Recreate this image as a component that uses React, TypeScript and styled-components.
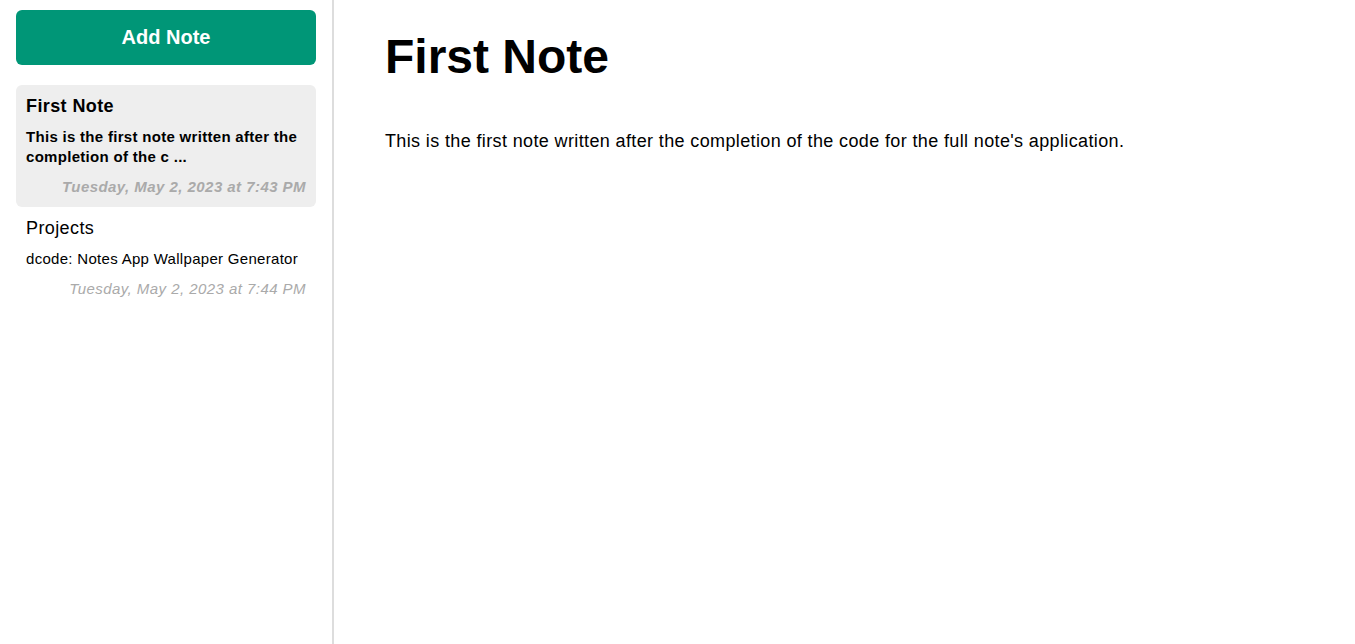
import React from "react";
import styled, { createGlobalStyle } from "styled-components";

const Global = createGlobalStyle`
  html, body { margin: 0; padding: 0; background: #fff; }
  body { font-family: "Liberation Sans", Arial, sans-serif; color: #000; }
  * { box-sizing: border-box; }
`;

const Layout = styled.div`
  display: flex;
  height: 644px;
`;

const Sidebar = styled.aside`
  width: 334px;
  flex: none;
  border-right: 2px solid #ddd;
  padding: 10px 16px;
  display: flex;
  flex-direction: column;
`;

const AddButton = styled.button`
  height: 55px;
  border: none;
  border-radius: 6px;
  background: #009677;
  color: #fff;
  font-family: inherit;
  font-size: 20px;
  font-weight: bold;
  cursor: pointer;
  margin-bottom: 20px;
`;

const NoteList = styled.div`
  display: flex;
  flex-direction: column;
`;

const NoteItem = styled.div<{ $active?: boolean }>`
  padding: 10px;
  border-radius: 6px;
  background: ${(p) => (p.$active ? "#eeeeee" : "transparent")};
  font-weight: ${(p) => (p.$active ? "bold" : "normal")};
  display: flex;
  flex-direction: column;
`;

const NoteTitle = styled.div`
  font-size: 18px;
  line-height: 22px;
  letter-spacing: 0.4px;
  margin-bottom: 10px;
`;

const NotePreview = styled.div`
  font-size: 15px;
  line-height: 20px;
  letter-spacing: 0.3px;
  margin-bottom: 10px;
`;

const NoteDate = styled.div`
  font-size: 15px;
  line-height: 20px;
  letter-spacing: 0.45px;
  font-style: italic;
  color: #aaa;
  text-align: right;
`;

const Main = styled.main`
  flex: 1;
  padding: 30px 51px;
`;

const Heading = styled.h1`
  font-size: 48px;
  line-height: 54px;
  margin: 0 0 46px;
  font-weight: bold;
`;

const Body = styled.p`
  font-size: 18px;
  line-height: 22px;
  letter-spacing: 0.37px;
  margin: 0;
`;

export default function App() {
  return (
    <>
      <Global />
      <Layout>
        <Sidebar>
          <AddButton>Add Note</AddButton>
          <NoteList>
            <NoteItem $active>
              <NoteTitle>First Note</NoteTitle>
              <NotePreview>This is the first note written after the completion of the c ...</NotePreview>
              <NoteDate>Tuesday, May 2, 2023 at 7:43 PM</NoteDate>
            </NoteItem>
            <NoteItem>
              <NoteTitle>Projects</NoteTitle>
              <NotePreview>dcode: Notes App Wallpaper Generator</NotePreview>
              <NoteDate>Tuesday, May 2, 2023 at 7:44 PM</NoteDate>
            </NoteItem>
          </NoteList>
        </Sidebar>
        <Main>
          <Heading>First Note</Heading>
          <Body>This is the first note written after the completion of the code for the full note's application.</Body>
        </Main>
      </Layout>
    </>
  );
}
